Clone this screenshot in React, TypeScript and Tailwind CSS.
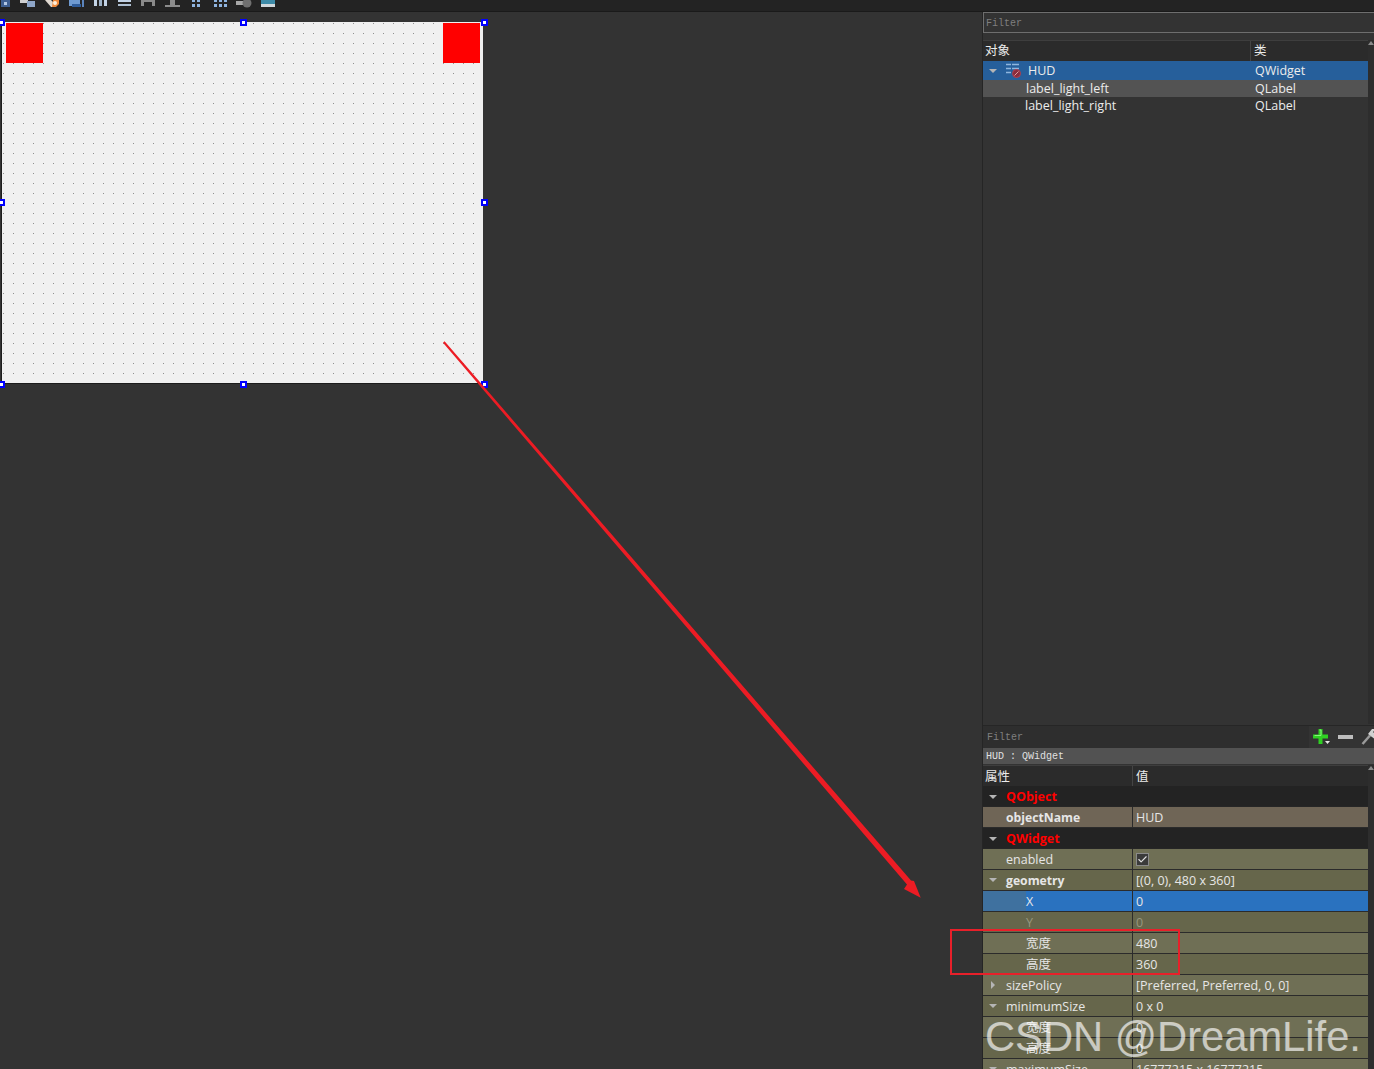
import { Check } from 'lucide-react'

const FONT = { fontFamily: '"Open Sans", "Noto Sans CJK SC", sans-serif' }

interface PropRow {
  name: string
  value?: string
  bg: string
  indent: 'group' | 'top' | 'sub'
  arrow?: 'down' | 'right'
  bold?: boolean
  dim?: boolean
  check?: boolean
}

const OLIVE_A = 'bg-[#6f6f55]'
const OLIVE_B = 'bg-[#66664b]'

const PROPS: PropRow[] = [
  { name: 'QObject', bg: 'bg-[#232323]', indent: 'group', arrow: 'down' },
  { name: 'objectName', value: 'HUD', bg: 'bg-[#6f6556]', indent: 'top', bold: true },
  { name: 'QWidget', bg: 'bg-[#232323]', indent: 'group', arrow: 'down' },
  { name: 'enabled', bg: OLIVE_A, indent: 'top', check: true },
  { name: 'geometry', value: '[(0, 0), 480 x 360]', bg: OLIVE_B, indent: 'top', arrow: 'down', bold: true },
  { name: 'X', value: '0', bg: 'bg-[#2a72bf]', indent: 'sub' },
  { name: 'Y', value: '0', bg: OLIVE_B, indent: 'sub', dim: true },
  { name: '宽度', value: '480', bg: OLIVE_A, indent: 'sub' },
  { name: '高度', value: '360', bg: OLIVE_B, indent: 'sub' },
  { name: 'sizePolicy', value: '[Preferred, Preferred, 0, 0]', bg: OLIVE_A, indent: 'top', arrow: 'right' },
  { name: 'minimumSize', value: '0 x 0', bg: OLIVE_B, indent: 'top', arrow: 'down' },
  { name: '宽度', value: '0', bg: OLIVE_A, indent: 'sub' },
  { name: '高度', value: '0', bg: OLIVE_B, indent: 'sub' },
  { name: 'maximumSize', value: '16777215 x 16777215', bg: OLIVE_A, indent: 'top', arrow: 'down' },
]

function Arrow({ dir }: { dir: 'down' | 'right' }) {
  return (
    <svg width="8" height="8" viewBox="0 0 8 8" className="shrink-0">
      {dir === 'down' ? <path d="M0 2h8L4 6z" fill="#b5b5b5" /> : <path d="M2 0v8l4-4z" fill="#b5b5b5" />}
    </svg>
  )
}

// only the bottom few pixels of each toolbar button are left in the crop
function ToolbarIcons() {
  return (
    <svg width="280" height="11" viewBox="0 0 280 11" className="block">
      <rect x="1" y="0" width="9" height="7" fill="#3f5f90" />
      <rect x="4" y="2" width="3" height="3" fill="#b4c8e4" />
      <rect x="20" y="0" width="8" height="3" fill="#d0d0d0" />
      <rect x="27" y="1" width="8" height="6" fill="#8ea6c8" />
      <path d="M45 0h6l3 3v4h-3z" fill="#e0d8d0" />
      <path d="M53 0h6v4l-3 3h-4z" fill="#f08a3c" />
      <circle cx="55" cy="3" r="2" fill="#fff0dc" />
      <rect x="69" y="0" width="11" height="6" fill="#6f9ad0" />
      <rect x="72" y="4" width="9" height="3" fill="#2f5c9a" />
      <rect x="82" y="0" width="2" height="7" fill="#5b84bc" />
      <rect x="94" y="0" width="3" height="6" fill="#c3d3e6" />
      <rect x="99" y="0" width="3" height="6" fill="#9eb2c8" />
      <rect x="104" y="0" width="3" height="6" fill="#c3d3e6" />
      <rect x="118" y="0" width="13" height="2" fill="#c3d3e6" />
      <rect x="118" y="4" width="13" height="2" fill="#aebfd2" />
      <path d="M141 0h14v6h-3V2h-8v4h-3z" fill="#8a8a8a" />
      <path d="M165 5h15v2h-15zM170 0h5v5h-5z" fill="#8c8c8c" />
      <rect x="192" y="0" width="3" height="2" fill="#8fb4e0" />
      <rect x="197" y="0" width="3" height="2" fill="#8fb4e0" />
      <rect x="192" y="4" width="3" height="3" fill="#8fb4e0" />
      <rect x="197" y="4" width="3" height="3" fill="#8fb4e0" />
      <rect x="214" y="0" width="3" height="2" fill="#8fb4e0" />
      <rect x="219" y="0" width="3" height="2" fill="#8fb4e0" />
      <rect x="224" y="0" width="3" height="2" fill="#8fb4e0" />
      <rect x="214" y="4" width="3" height="3" fill="#8fb4e0" />
      <rect x="219" y="4" width="3" height="3" fill="#8fb4e0" />
      <rect x="224" y="4" width="3" height="3" fill="#8fb4e0" />
      <rect x="236" y="1" width="10" height="4" fill="#a8a8a8" />
      <circle cx="247" cy="3" r="4.5" fill="#707070" />
      <rect x="261" y="0" width="14" height="4" fill="#3d8ba8" />
      <rect x="261" y="4" width="14" height="3" fill="#d0d8dc" />
    </svg>
  )
}

function HudIcon() {
  return (
    <svg width="16" height="15" viewBox="0 0 16 15" className="shrink-0">
      <path d="M0 1.5h5M0 5.5h5M0 9.5h5M6 1.5h7M6 5.5h7" stroke="#8fb6de" strokeWidth="1.6" />
      <circle cx="10.5" cy="10.5" r="4" fill="#8a2c3c" stroke="#b04050" />
      <path d="M8.5 12.5l4-4" stroke="#e0a0a0" />
    </svg>
  )
}

function Handle({ cls }: { cls: string }) {
  return <div className={`absolute w-[7px] h-[7px] bg-white border-2 border-[#0000ff] ${cls}`} />
}

function FormCanvas() {
  return (
    <div className="relative ml-[2px] mt-[10px] w-[481px] h-[361px] bg-[#f0f0f0] bg-[radial-gradient(circle_at_1.5px_1.5px,#8f8f8f_0.75px,transparent_1px)] bg-[length:10px_10px] shadow-[-1px_1px_0_#1c1c1c]">
      <div className="absolute left-[4px] top-[1px] w-[37px] h-[40px] bg-[#ff0000]" />
      <div className="absolute left-[441px] top-[1px] w-[37px] h-[40px] bg-[#ff0000]" />
      <Handle cls="left-[-4px] top-[-3px]" />
      <Handle cls="left-[238px] top-[-3px]" />
      <Handle cls="left-[479px] top-[-3px]" />
      <Handle cls="left-[-4px] top-[177px]" />
      <Handle cls="left-[479px] top-[177px]" />
      <Handle cls="left-[-4px] top-[359px]" />
      <Handle cls="left-[238px] top-[359px]" />
      <Handle cls="left-[479px] top-[359px]" />
    </div>
  )
}

function ScrollBar() {
  return (
    <div className="w-[6px] shrink-0 bg-[#2d2d2d] flex flex-col">
      <div className="h-[6px] flex justify-center items-center">
        <svg width="6" height="4" viewBox="0 0 6 4"><path d="M3 0l3 4H0z" fill="#8a8a8a" /></svg>
      </div>
    </div>
  )
}

function PropertyRow({ row }: { row: PropRow }) {
  const text = row.dim ? 'text-[#97977f]' : 'text-[#e6e6e6]'
  if (row.indent === 'group') {
    return (
      <div className={`h-[21px] shrink-0 flex items-center pt-[2px] ${row.bg} border-b border-[#262626]`}>
        <div className="w-[23px] pl-[6px] flex">{row.arrow && <Arrow dir={row.arrow} />}</div>
        <span className="text-[12.5px] font-bold text-[#ff0000]">{row.name}</span>
      </div>
    )
  }
  return (
    <div className={`h-[21px] shrink-0 flex ${row.bg} border-b border-[#2b2b2b]`}>
      <div className="w-[150px] shrink-0 flex items-center border-r border-[#2b2b2b]">
        {row.indent === 'sub' ? (
          <div className={`w-[43px] self-stretch shrink-0 ${row.name === 'X' ? 'bg-[#3f719f]' : ''}`} />
        ) : (
          <div className="w-[23px] shrink-0 pl-[6px] flex">{row.arrow && <Arrow dir={row.arrow} />}</div>
        )}
        <span className={`pt-[2px] ${row.bold ? 'font-bold text-[12.2px]' : 'text-[12.5px]'} ${text}`}>{row.name}</span>
      </div>
      <div className="flex-1 flex items-center pl-[3px]">
        {row.check ? (
          <div className="w-[13px] h-[13px] bg-[#3a3a3a] border border-[#8a8a8a] flex items-center justify-center">
            <Check size={11} strokeWidth={2.5} color="#e0e0e0" />
          </div>
        ) : (
          <span className={`pt-[2px] text-[12.5px] ${text}`}>{row.value}</span>
        )}
      </div>
    </div>
  )
}

export default function App() {
  return (
    <div className="relative w-[1374px] h-[1069px] overflow-hidden bg-[#333333] flex flex-col" style={FONT}>
      {/* Toolbar, cut off at the top */}
      <div className="h-[12px] shrink-0 bg-[#232323] border-b border-[#1a1a1a]">
        <ToolbarIcons />
      </div>

      <div className="flex-1 flex min-h-0">
        {/* Designer canvas */}
        <div className="w-[982px] shrink-0">
          <FormCanvas />
        </div>

        {/* Right dock */}
        <div className="flex-1 min-w-0 flex flex-col border-l border-[#252525] overflow-hidden">
          <div className="h-[21px] w-[400px] shrink-0 border border-[#6e6e6e] bg-[#333333] flex items-center pt-[2px] pl-[2px] font-['Liberation_Mono',monospace] text-[10px] text-[#7f7f7f]">
            Filter
          </div>

          {/* Object inspector */}
          <div className="mt-[7px] h-[684px] shrink-0 flex">
            <div className="flex-1 min-w-0 flex flex-col bg-[#333333]">
              <div className="h-[21px] shrink-0 flex bg-[#2b2b2b] border-t border-[#3e3e3e] text-[12.5px] text-[#ececec]">
                <div className="w-[268px] pl-[2px] border-r border-[#444444] flex items-center">对象</div>
                <div className="flex-1 pl-[3px] flex items-center">类</div>
              </div>
              <div className="h-[19px] shrink-0 flex items-center bg-[#265f9b] text-[12.5px] text-[#ececec]">
                <div className="w-[23px] pl-[6px] flex"><Arrow dir="down" /></div>
                <HudIcon />
                <span className="ml-[6px] w-[227px] pt-[2px]">HUD</span>
                <span className="pt-[2px]">QWidget</span>
              </div>
              <div className="h-[17px] shrink-0 flex items-center pt-[2px] bg-[#535353] text-[12.5px] text-[#ececec]">
                <span className="ml-[43px] w-[229px]">label_light_left</span>
                <span>QLabel</span>
              </div>
              <div className="h-[17px] shrink-0 flex items-center pt-[2px] text-[12.5px] text-[#ececec]">
                <span className="ml-[42px] w-[230px]">label_light_right</span>
                <span>QLabel</span>
              </div>
            </div>
            <ScrollBar />
          </div>

          {/* Property editor toolbar */}
          <div className="mt-[1px] h-[23px] shrink-0 flex border-t border-[#262626]">
            <div className="w-[326px] shrink-0 bg-[#2e2e2e] flex items-center pl-[4px] font-['Liberation_Mono',monospace] text-[10px] text-[#7f7f7f]">
              Filter
            </div>
            <div className="flex items-center pl-[4px] gap-[6px]">
              <svg width="19" height="18" viewBox="0 0 19 18" className="shrink-0">
                <path d="M5.500 1h4v5.500H15v4H9.500V16h-4v-5.500H0v-4h5.500z" fill="#2fd022" />
                <path d="M6.500 2h1.500v5.500H1.500" stroke="#8af07e" fill="none" />
                <path d="M12 13h5l-2.500 3z" fill="#e8e8e8" />
              </svg>
              <svg width="15" height="16" viewBox="0 0 15 16" className="shrink-0">
                <rect x="0" y="6" width="15" height="4" fill="#bdbdbd" />
              </svg>
              <svg width="18" height="18" viewBox="0 0 18 18" className="shrink-0 ml-[2px]">
                <path d="M1.500 16L9 7.500" stroke="#9a9a9a" strokeWidth="2.500" />
                <path d="M7 6l4-5h4l-3 3 2 2 3-2v3l-4 3.500z" fill="#d0d0d0" />
              </svg>
            </div>
          </div>

          <div className="h-[16px] shrink-0 bg-[#525252] flex items-center pl-[3px] font-['Liberation_Mono',monospace] text-[10px] text-[#e0e0e0]">
            HUD : QWidget
          </div>

          {/* Property table */}
          <div className="mt-[1px] flex-1 min-h-0 flex">
            <div className="flex-1 min-w-0 flex flex-col">
              <div className="h-[21px] shrink-0 flex bg-[#2b2b2b] border-t border-[#3e3e3e] text-[12.5px] text-[#ececec]">
                <div className="w-[150px] pl-[2px] pt-[2px] border-r border-[#444444] flex items-center">属性</div>
                <div className="flex-1 pl-[3px] pt-[2px] flex items-center">值</div>
              </div>
              {PROPS.map((row, i) => (
                <PropertyRow key={i} row={row} />
              ))}
            </div>
            <ScrollBar />
          </div>
        </div>
      </div>

      {/* Annotations drawn over the screenshot */}
      <svg width="1374" height="1069" viewBox="0 0 1374 1069" className="absolute left-0 top-0 pointer-events-none">
        <polygon points="443,342.800 444.600,341.200 911,880.500 914,881 920.700,897.700 904,889 907,884.500" fill="#ec1c24" />
      </svg>
      <div className="absolute left-[950px] top-[929px] w-[230px] h-[46px] border-2 border-[#e8202a]" />
      <div className="absolute left-[985px] top-[1009px] font-['Liberation_Sans',sans-serif] text-[41.7px] leading-[56px] text-white/65 whitespace-nowrap">
        CSDN @DreamLife.
      </div>
    </div>
  )
}
